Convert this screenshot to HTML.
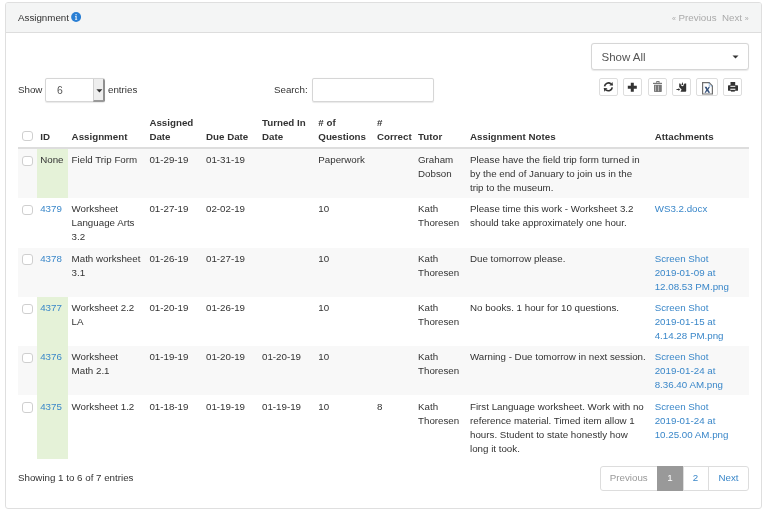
<!DOCTYPE html>
<html><head><meta charset="utf-8">
<style>
*{box-sizing:border-box;margin:0;padding:0}
html,body{width:768px;height:514px;overflow:hidden;background:#fff}
body{font-family:"Liberation Sans",sans-serif;font-size:9.75px;line-height:13.93px;color:#333;position:relative}
.abs{position:absolute;white-space:nowrap}
#panel{position:absolute;left:5px;top:2px;width:757px;height:507px;border:1px solid #dfdfdf;border-radius:3px}
#ph{position:absolute;left:0;top:0;width:755px;height:30px;background:#f4f5f5;border-bottom:1px solid #ddd;border-radius:2px 2px 0 0}
.ctl{position:absolute;border:1px solid #d6d6d6;border-radius:3px;background:#fff;box-shadow:0 0.75px 1px rgba(0,0,0,.09)}
.btn{position:absolute;top:78px;height:18px;border:1px solid #ddd;border-radius:2px;background:#fff}
.btn svg{position:absolute;left:0;top:0}
.row{position:absolute;left:18px;width:731px}
.row.s{background:#f8f8f8}
.c{position:absolute;top:3.75px;white-space:nowrap}
.th{font-weight:bold}
a{color:#3a87c9;text-decoration:none}
.cb{position:absolute;width:10.3px;height:10.4px;border:1px solid #cfcfcf;border-radius:3px;background:#fff}
.green{position:absolute;left:37px;width:31px;background:#e5f2d8}
.pg{position:absolute;top:466px;height:25px;border:1px solid #ddd;text-align:center;line-height:21px}
</style></head><body><div id="wrap" style="position:absolute;left:0;top:0;width:768px;height:514px;will-change:transform">
<div id="panel"><div id="ph"></div></div>
<div class="abs" style="left:18px;top:10.5px">Assignment</div>
<svg class="abs" style="left:71px;top:12px" width="10" height="10" viewBox="0 0 10 10"><circle cx="5.1" cy="5" r="4.95" fill="#2a7fd4"/><g fill="#fff"><rect x="4.5" y="2.1" width="1.1" height="1.2"/><path d="M4.1 4.1h1.5v3h0.6v0.7h-2.1v-0.7h0.5v-2.3h-0.5z"/></g></svg>
<div class="abs" style="left:672px;top:10.5px;color:#aaa"><span style="font-size:7px">«</span> Previous&nbsp; Next <span style="font-size:7px">»</span></div>

<div class="ctl" style="left:591px;top:43px;width:158px;height:27px"></div>
<div class="abs" style="left:601.5px;top:49px;font-size:11.5px;line-height:16px;color:#555">Show All</div>
<svg class="abs" style="left:732px;top:55px" width="7" height="4"><path d="M0.5 0.5h6l-3 3z" fill="#333"/></svg>

<div class="btn" style="left:599px;top:78px;width:19px;height:18px"></div>
<svg class="abs" style="left:598px;top:77px" width="20" height="20" viewBox="0 0 20 20"><g fill="none" stroke="#333" stroke-width="1.65"><path d="M6.54 9.26A3.9 3.9 0 0 1 12.9 6.81"/><path d="M14.26 10.34A3.9 3.9 0 0 1 7.9 12.79"/></g><path d="M11.4 8.4L14.4 4.9L15.1 8.6Z M9.4 11.2L6.4 14.7L5.7 11Z" fill="#333"/></svg>
<div class="btn" style="left:623px;top:78px;width:19px;height:18px"></div>
<svg class="abs" style="left:622px;top:77px" width="20" height="20" viewBox="0 0 20 20"><path d="M8.8 5.8h3v3h3v3h-3v3h-3v-3h-3v-3h3z" fill="#333"/></svg>
<div class="btn" style="left:648px;top:78px;width:19px;height:18px"></div>
<svg class="abs" style="left:646px;top:77px" width="20" height="20" viewBox="0 0 20 20"><g fill="#777"><path d="M10.3 4h3.2v2h-0.9v-1.1h-1.4v1.1h-0.9z"/><rect x="7" y="5.8" width="9" height="1.2"/><path d="M8 7.8h7.8v6.4q0 0.8-0.8 0.8h-6.2q-0.8 0-0.8-0.8z"/></g><rect x="9" y="8.6" width="0.9" height="5.6" fill="#bbb"/><rect x="12.1" y="8.6" width="0.9" height="5.6" fill="#bbb"/></svg>
<div class="btn" style="left:672px;top:78px;width:19px;height:18px"></div>
<svg class="abs" style="left:670px;top:77px" width="20" height="20" viewBox="0 0 20 20"><path d="M9.2 6.4H10.3Q12.4 12 14.5 6.4H16.2V14Q16.2 14.8 15.4 14.8H10.5L11.6 12.5L9.6 10.4L9.2 10Z" fill="#333"/><path d="M11.4 7.9L12.4 5.1L13.4 7.9Z" fill="#333"/><path d="M6.5 12h2v-1l1.6 1.5-1.6 1.5v-1h-2z" fill="#333"/></svg>
<div class="btn" style="left:696px;top:78px;width:22px;height:18px"></div>
<svg class="abs" style="left:695px;top:77px" width="24" height="20" viewBox="0 0 24 20"><path d="M7.6 5.7h6.6l3.2 3.2v8.1h-9.8z" fill="#fff" stroke="#6f6f6f" stroke-width="1.2"/><path d="M14.2 5.9v3h3" fill="none" stroke="#5a8fc8" stroke-width="0.9" stroke-dasharray="1 0.6"/><path d="M9.6 9.8h2l1 1.9 1-1.9h1.4l-1.7 2.9 1.9 3.1h-2l-1.1-2-1.1 2h-1.5l1.8-3.1z" fill="#34507a"/></svg>
<div class="btn" style="left:723px;top:78px;width:19px;height:18px"></div>
<svg class="abs" style="left:721px;top:77px" width="24" height="20" viewBox="0 0 24 20"><g fill="#333"><rect x="9.5" y="5" width="4.7" height="3.4"/><rect x="7" y="8.2" width="10" height="5.6" rx="0.6"/><rect x="9.9" y="12.8" width="3.9" height="1.8"/></g><g fill="#fff"><rect x="9.4" y="9" width="4.9" height="0.8"/><rect x="9.3" y="11.7" width="5.1" height="1.1"/></g></svg>
<div class="abs" style="left:18px;top:83px">Show</div>
<div class="ctl" style="left:45px;top:78px;width:60px;height:24px;border-radius:2px"></div>
<div class="abs" style="left:57px;top:83.5px;color:#555;font-size:10.4px">6</div>
<div class="abs" style="left:93px;top:79px;width:12px;height:23px;background:#eee;border-left:1px solid #d0d0d0;border-right:2px solid #8f8f8f;border-bottom:2px solid #9a9a9a;border-radius:0 2px 2px 0"></div>
<svg class="abs" style="left:95.5px;top:88.5px" width="7" height="4"><path d="M0.4 0.2h6l-3 3.2z" fill="#333"/></svg>
<div class="abs" style="left:108px;top:83px">entries</div>
<div class="abs" style="left:274px;top:83px">Search:</div>
<div class="ctl" style="left:312px;top:78px;width:122px;height:24px;border-radius:2px"></div>

<!-- table header -->
<div class="abs" style="left:18px;top:147.0px;width:731.2px;height:2px;background:#ddd"></div>
<div class="cb" style="left:22.4px;top:130.9px"></div>
<div class="c th" style="left:40.2px;top:130.32px">ID</div>
<div class="c th" style="left:71.6px;top:130.32px">Assignment</div>
<div class="c th" style="left:149.4px;top:116.39px">Assigned<br>Date</div>
<div class="c th" style="left:206.0px;top:130.32px">Due Date</div>
<div class="c th" style="left:262.0px;top:116.39px">Turned In<br>Date</div>
<div class="c th" style="left:318.3px;top:116.39px"># of<br>Questions</div>
<div class="c th" style="left:377.0px;top:116.39px">#<br>Correct</div>
<div class="c th" style="left:418.0px;top:130.32px">Tutor</div>
<div class="c th" style="left:470.0px;top:130.32px">Assignment Notes</div>
<div class="c th" style="left:654.7px;top:130.32px">Attachments</div>
<div class="abs" style="left:18px;top:149.00px;width:731.2px;height:49.29px;background:#f8f8f8"></div>
<div class="abs" style="left:36.7px;top:149.00px;width:31.30px;height:49.29px;background:#e5f2d8"></div>
<div class="cb" style="left:22.4px;top:155.80px"></div>
<div class="c" style="left:40.2px;top:153.15px">None</div>
<div class="c" style="left:71.6px;top:153.15px">Field Trip Form</div>
<div class="c" style="left:149.4px;top:153.15px">01-29-19</div>
<div class="c" style="left:206.0px;top:153.15px">01-31-19</div>
<div class="c" style="left:318.3px;top:153.15px">Paperwork</div>
<div class="c" style="left:418.0px;top:153.15px">Graham<br>Dobson</div>
<div class="c" style="left:470.0px;top:153.15px">Please have the field trip form turned in<br>by the end of January to join us in the<br>trip to the museum.</div>
<div class="cb" style="left:22.4px;top:205.09px"></div>
<div class="c" style="left:40.2px;top:202.44px"><a>4379</a></div>
<div class="c" style="left:71.6px;top:202.44px">Worksheet<br>Language Arts<br>3.2</div>
<div class="c" style="left:149.4px;top:202.44px">01-27-19</div>
<div class="c" style="left:206.0px;top:202.44px">02-02-19</div>
<div class="c" style="left:318.3px;top:202.44px">10</div>
<div class="c" style="left:418.0px;top:202.44px">Kath<br>Thoresen</div>
<div class="c" style="left:470.0px;top:202.44px">Please time this work - Worksheet 3.2<br>should take approximately one hour.</div>
<div class="c" style="left:654.7px;top:202.44px"><a>WS3.2.docx</a></div>
<div class="abs" style="left:18px;top:247.58px;width:731.2px;height:49.29px;background:#f8f8f8"></div>
<div class="cb" style="left:22.4px;top:254.38px"></div>
<div class="c" style="left:40.2px;top:251.73px"><a>4378</a></div>
<div class="c" style="left:71.6px;top:251.73px">Math worksheet<br>3.1</div>
<div class="c" style="left:149.4px;top:251.73px">01-26-19</div>
<div class="c" style="left:206.0px;top:251.73px">01-27-19</div>
<div class="c" style="left:318.3px;top:251.73px">10</div>
<div class="c" style="left:418.0px;top:251.73px">Kath<br>Thoresen</div>
<div class="c" style="left:470.0px;top:251.73px">Due tomorrow please.</div>
<div class="c" style="left:654.7px;top:251.73px"><a>Screen Shot<br>2019-01-09 at<br>12.08.53 PM.png</a></div>
<div class="abs" style="left:36.7px;top:296.87px;width:31.30px;height:49.29px;background:#e5f2d8"></div>
<div class="cb" style="left:22.4px;top:303.67px"></div>
<div class="c" style="left:40.2px;top:301.02px"><a>4377</a></div>
<div class="c" style="left:71.6px;top:301.02px">Worksheet 2.2<br>LA</div>
<div class="c" style="left:149.4px;top:301.02px">01-20-19</div>
<div class="c" style="left:206.0px;top:301.02px">01-26-19</div>
<div class="c" style="left:318.3px;top:301.02px">10</div>
<div class="c" style="left:418.0px;top:301.02px">Kath<br>Thoresen</div>
<div class="c" style="left:470.0px;top:301.02px">No books. 1 hour for 10 questions.</div>
<div class="c" style="left:654.7px;top:301.02px"><a>Screen Shot<br>2019-01-15 at<br>4.14.28 PM.png</a></div>
<div class="abs" style="left:18px;top:346.16px;width:731.2px;height:49.29px;background:#f8f8f8"></div>
<div class="abs" style="left:36.7px;top:346.16px;width:31.30px;height:49.29px;background:#e5f2d8"></div>
<div class="cb" style="left:22.4px;top:352.96px"></div>
<div class="c" style="left:40.2px;top:350.31px"><a>4376</a></div>
<div class="c" style="left:71.6px;top:350.31px">Worksheet<br>Math 2.1</div>
<div class="c" style="left:149.4px;top:350.31px">01-19-19</div>
<div class="c" style="left:206.0px;top:350.31px">01-20-19</div>
<div class="c" style="left:262.0px;top:350.31px">01-20-19</div>
<div class="c" style="left:318.3px;top:350.31px">10</div>
<div class="c" style="left:418.0px;top:350.31px">Kath<br>Thoresen</div>
<div class="c" style="left:470.0px;top:350.31px">Warning - Due tomorrow in next session.</div>
<div class="c" style="left:654.7px;top:350.31px"><a>Screen Shot<br>2019-01-24 at<br>8.36.40 AM.png</a></div>
<div class="abs" style="left:36.7px;top:395.45px;width:31.30px;height:63.22px;background:#e5f2d8"></div>
<div class="cb" style="left:22.4px;top:402.25px"></div>
<div class="c" style="left:40.2px;top:400.20px"><a>4375</a></div>
<div class="c" style="left:71.6px;top:400.20px">Worksheet 1.2</div>
<div class="c" style="left:149.4px;top:400.20px">01-18-19</div>
<div class="c" style="left:206.0px;top:400.20px">01-19-19</div>
<div class="c" style="left:262.0px;top:400.20px">01-19-19</div>
<div class="c" style="left:318.3px;top:400.20px">10</div>
<div class="c" style="left:377.0px;top:400.20px">8</div>
<div class="c" style="left:418.0px;top:400.20px">Kath<br>Thoresen</div>
<div class="c" style="left:470.0px;top:400.20px">First Language worksheet. Work with no<br>reference material. Timed item allow 1<br>hours. Student to state honestly how<br>long it took.</div>
<div class="c" style="left:654.7px;top:400.20px"><a>Screen Shot<br>2019-01-24 at<br>10.25.00 AM.png</a></div>
<div class="abs" style="left:18px;top:458px;"></div>
<div class="abs" style="left:18px;top:471px">Showing 1 to 6 of 7 entries</div>
<div class="pg" style="left:600px;width:57.5px;border-radius:3px 0 0 3px;color:#999">Previous</div>
<div class="pg" style="left:657px;width:26px;background:#999;border-color:#999;color:#fff">1</div>
<div class="pg" style="left:682.5px;width:26px;color:#3a87c9">2</div>
<div class="pg" style="left:708px;width:41px;border-radius:0 3px 3px 0;color:#3a87c9">Next</div>
</div></body></html>
